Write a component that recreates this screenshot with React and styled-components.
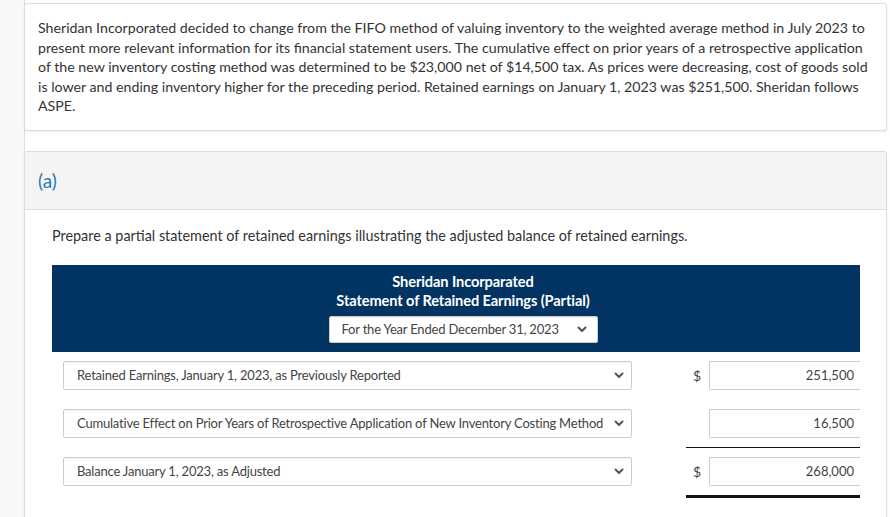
import React from "react";
import styled, { createGlobalStyle } from "styled-components";

const GlobalStyle = createGlobalStyle`
  html, body {
    margin: 0;
    padding: 0;
    background: #f8f8f8;
    font-family: Lato, "Open Sans", Arial, sans-serif;
    color: #333333;
  }
`;

const Main = styled.div`
  margin-left: 24px;
  min-height: 517px;
  background: #ffffff;
  border-left: 1px solid #dedede;
  padding: 3px 3px 0 0;
  box-sizing: border-box;
`;

const Card = styled.div`
  margin-left: -1px;
  border: 1px solid #dcdcdc;
  border-radius: 3px;
  box-shadow: 0 1px 2px rgba(0, 0, 0, 0.08);
  background: #ffffff;
`;

const Intro = styled(Card)`
  padding: 14px 13px 14px 13px;
  margin-bottom: 20px;
`;

const Paragraph = styled.p`
  margin: 0;
  font-size: 14.2px;
  line-height: 19.5px;
  color: #333333;
`;

const PartHeader = styled.div`
  height: 57px;
  display: flex;
  align-items: center;
  padding-left: 13px;
  background: #f4f4f4;
  border-bottom: 1px solid #dddddd;
  font-size: 19px;
  color: #1f7ab8;
`;

const PartBody = styled.div`
  padding: 16px 26px 40px 27px;
`;

const Prompt = styled.p`
  margin: 0 0 20px 0;
  font-size: 14.4px;
  line-height: 19px;
  color: #333333;
`;

const StatementHead = styled.div`
  background: #013462;
  color: #ffffff;
  display: flex;
  flex-direction: column;
  align-items: center;
  padding: 7px 0 9px 14px;
`;

const Title = styled.div`
  font-size: 14.6px;
  font-weight: 700;
  line-height: 19.5px;
  letter-spacing: -0.1px;
`;

const Select = styled.div`
  display: flex;
  align-items: center;
  justify-content: space-between;
  box-sizing: border-box;
  height: ${(p) => (p.small ? "27px" : "29px")};
  width: ${(p) => p.width || "auto"};
  margin-top: ${(p) => (p.small ? "5px" : "0")};
  padding: 0 ${(p) => (p.small ? "10px" : "7px")} 0 ${(p) => (p.small ? "12px" : "13px")};
  background: #ffffff;
  border: 1px solid #cccccc;
  border-radius: 2px;
  box-shadow: inset 0 1px 1px rgba(0, 0, 0, 0.05);
  font-size: 13px;
  letter-spacing: -0.2px;
  color: #444444;
  white-space: nowrap;
`;

const Rows = styled.div`
  padding: 9px 0 0 11px;
`;

const Row = styled.div`
  display: grid;
  grid-template-columns: 569px 1fr 174px;
  align-items: start;
  margin-bottom: ${(p) => p.spacing}px;
`;

const AmountCell = styled.div`
  display: flex;
  align-items: center;
  padding-bottom: ${(p) => (p.line ? "9px" : "0")};
  border-bottom: ${(p) => p.line || "none"};
`;

const Dollar = styled.span`
  width: 23px;
  padding-left: 7px;
  box-sizing: border-box;
  font-size: 14px;
  color: #444444;
`;

const Amount = styled.div`
  box-sizing: border-box;
  height: 29px;
  width: 151px;
  display: flex;
  align-items: center;
  justify-content: flex-end;
  padding-right: 6px;
  border: 1px solid #cccccc;
  border-right: none;
  border-radius: 2px 0 0 2px;
  font-size: 13px;
  color: #444444;
`;

const Chevron = () => (
  <svg width="10" height="7" viewBox="0 0 10 7">
    <path d="M1.5 1.5 L5 5 L8.5 1.5" fill="none" stroke="#555" strokeWidth="2" strokeLinecap="round" strokeLinejoin="round" />
  </svg>
);

const rows = [
  { label: "Retained Earnings, January 1, 2023, as Previously Reported", dollar: true, value: "251,500", spacing: 19 },
  { label: "Cumulative Effect on Prior Years of Retrospective Application of New Inventory Costing Method", dollar: false, value: "16,500", line: "1px solid #111", spacing: 9 },
  { label: "Balance January 1, 2023, as Adjusted", dollar: true, value: "268,000", line: "3px solid #111", spacing: 0 },
];

export default function App() {
  return (
    <>
      <GlobalStyle />
      <Main>
        <Intro>
          <Paragraph>
            Sheridan Incorporated decided to change from the FIFO method of valuing inventory to the weighted average method in July 2023 to
            present more relevant information for its financial statement users. The cumulative effect on prior years of a retrospective application
            of the new inventory costing method was determined to be $23,000 net of $14,500 tax. As prices were decreasing, cost of goods sold
            is lower and ending inventory higher for the preceding period. Retained earnings on January 1, 2023 was $251,500. Sheridan follows
            ASPE.
          </Paragraph>
        </Intro>
        <Card>
          <PartHeader>(a)</PartHeader>
          <PartBody>
            <Prompt>Prepare a partial statement of retained earnings illustrating the adjusted balance of retained earnings.</Prompt>
            <StatementHead>
              <Title>Sheridan Incorparated</Title>
              <Title>Statement of Retained Earnings (Partial)</Title>
              <Select small width="269px">
                <span>For the Year Ended December 31, 2023</span>
                <Chevron />
              </Select>
            </StatementHead>
            <Rows>
              {rows.map((r) => (
                <Row key={r.label} spacing={r.spacing}>
                  <Select>
                    <span>{r.label}</span>
                    <Chevron />
                  </Select>
                  <div />
                  <AmountCell line={r.line}>
                    <Dollar>{r.dollar ? "$" : ""}</Dollar>
                    <Amount>{r.value}</Amount>
                  </AmountCell>
                </Row>
              ))}
            </Rows>
          </PartBody>
        </Card>
      </Main>
    </>
  );
}
